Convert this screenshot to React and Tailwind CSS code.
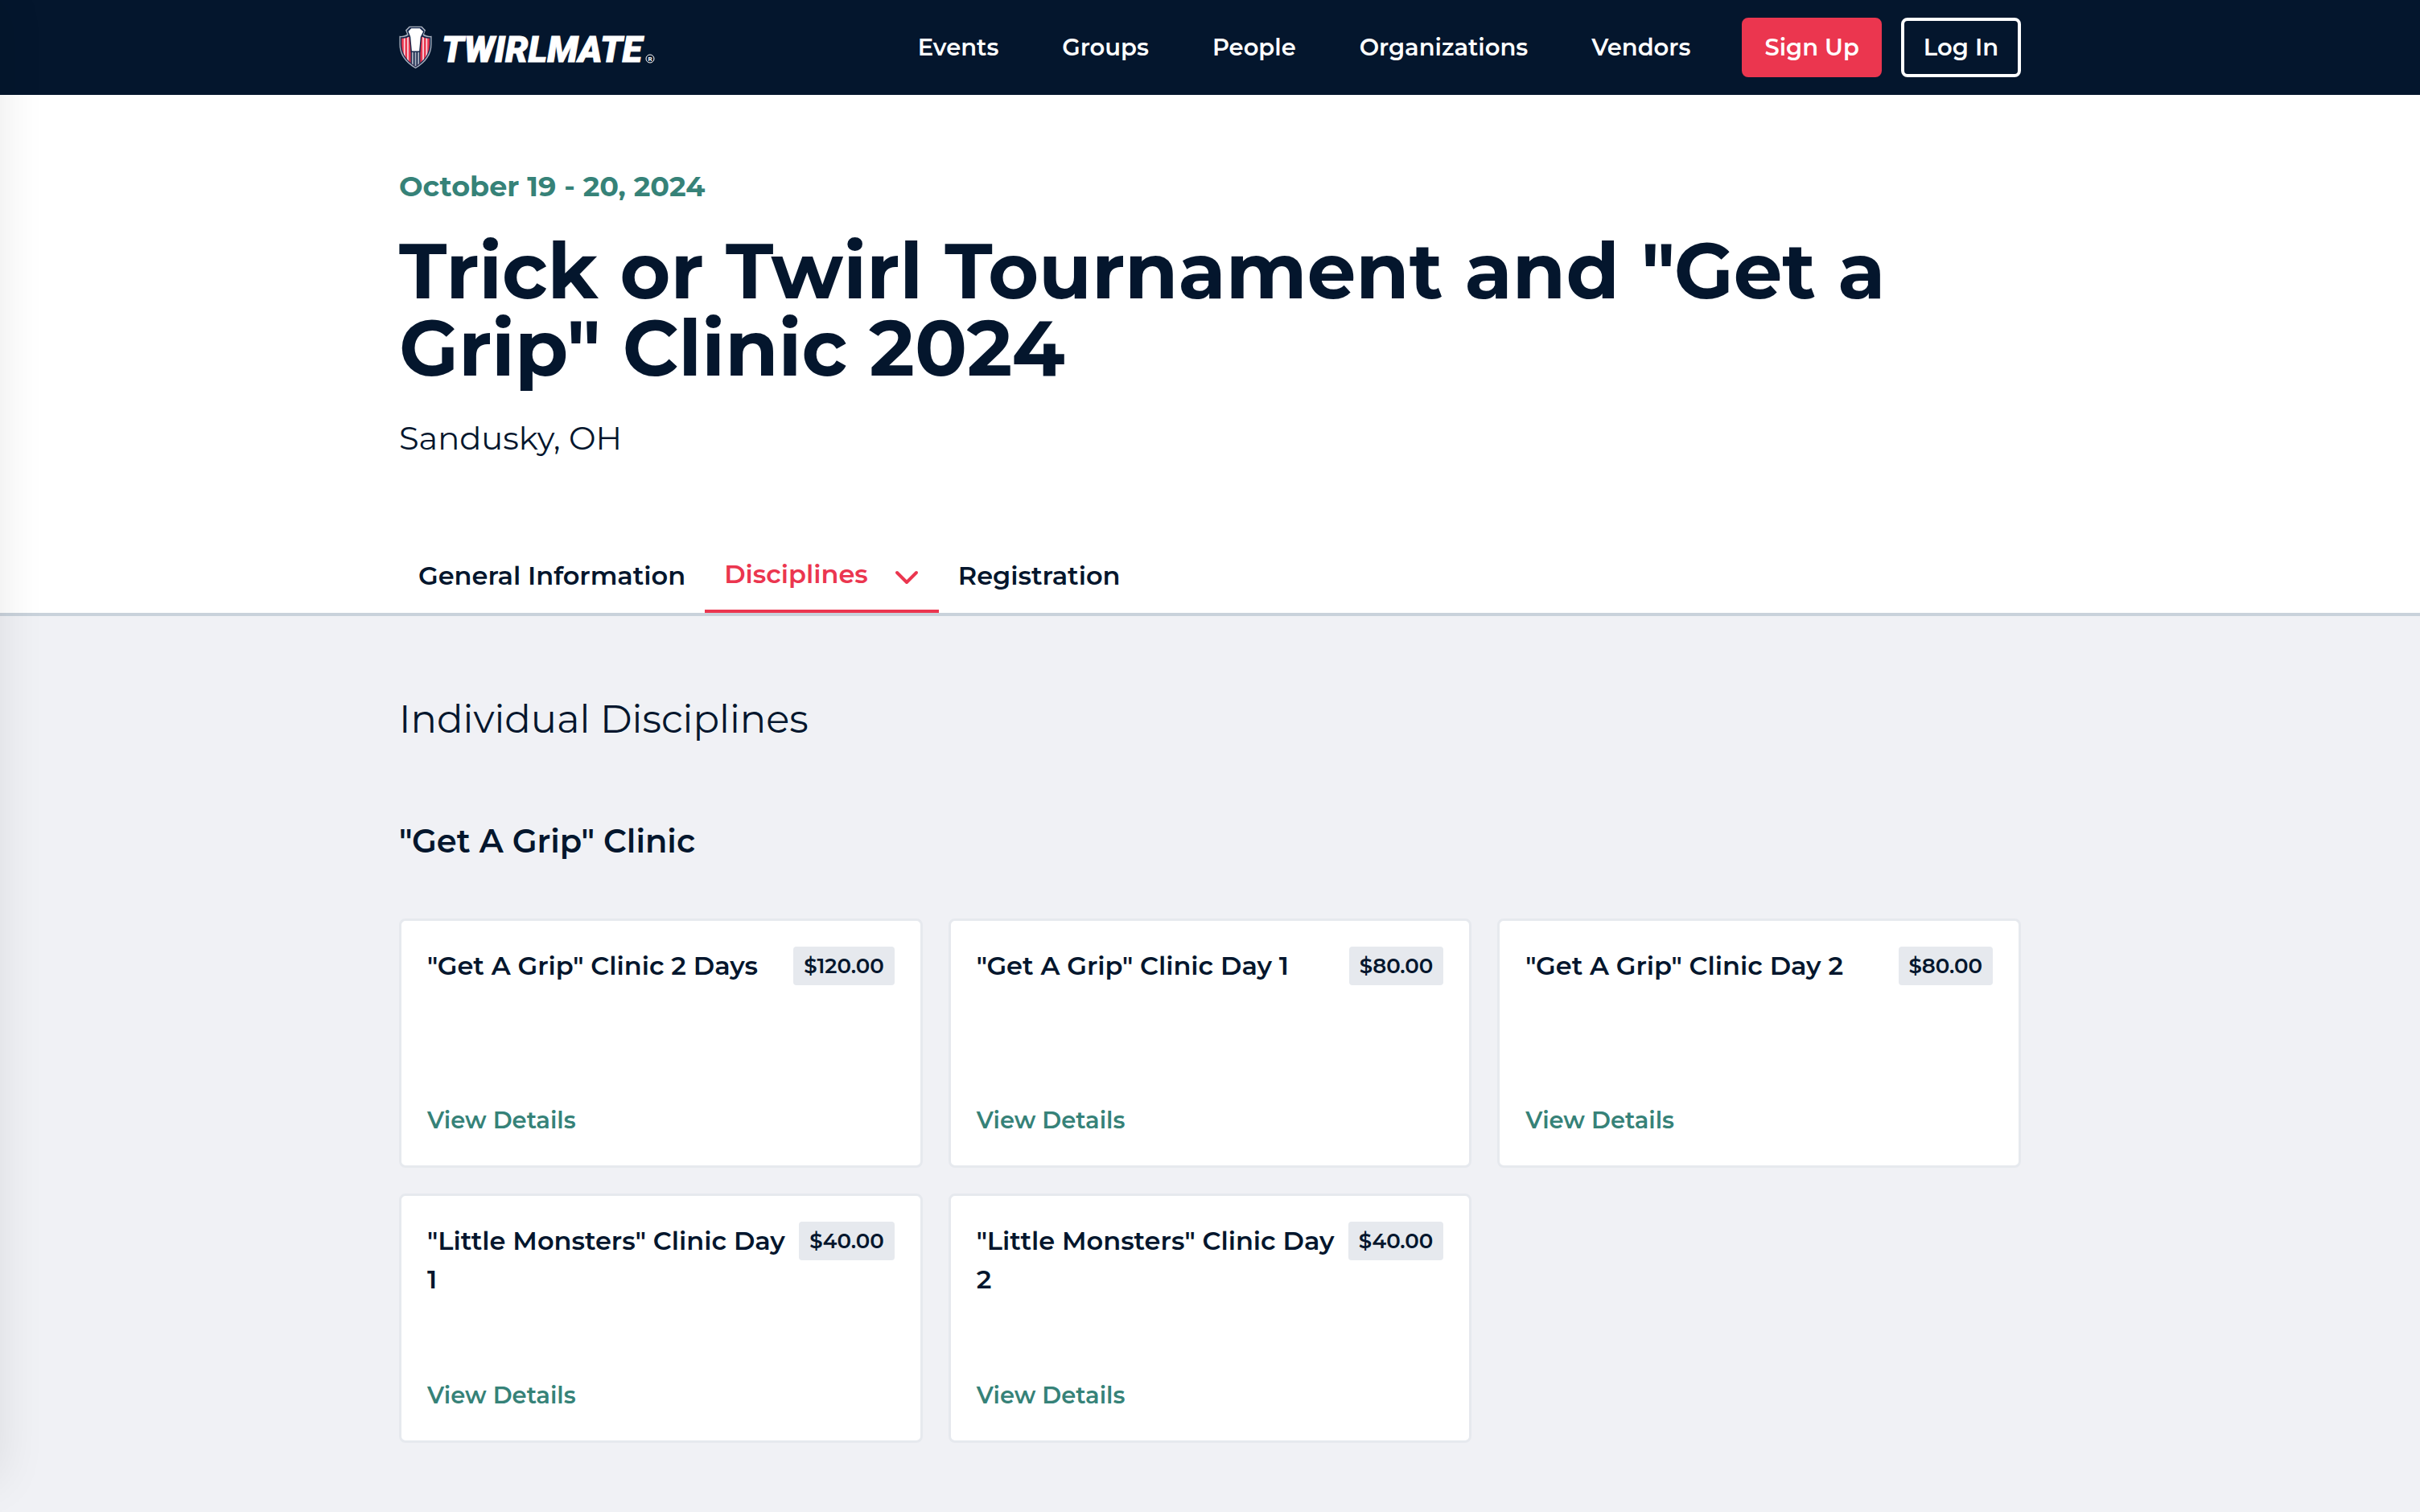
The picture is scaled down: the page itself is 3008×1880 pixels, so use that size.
import React from "react";

const navItems = ["Events", "Groups", "People", "Organizations", "Vendors"];

const disciplines = [
  { title: '"Get A Grip" Clinic 2 Days', price: "$120.00" },
  { title: '"Get A Grip" Clinic Day 1', price: "$80.00" },
  { title: '"Get A Grip" Clinic Day 2', price: "$80.00" },
  { title: '"Little Monsters" Clinic Day 1', price: "$40.00" },
  { title: '"Little Monsters" Clinic Day 2', price: "$40.00" },
];

const container = "mx-auto w-full max-w-[2016px]";

function Shield() {
  return (
    <svg viewBox="0 0 124 164" className="h-[54px] w-[41px]" aria-hidden="true">
      <defs>
        <clipPath id="shield-field">
          <path d="M9 47C20 49 31 46 37 42L62 20L87 42C93 46 104 49 115 47V70C115 104 95 133 62 153C29 133 9 104 9 70Z" />
        </clipPath>
      </defs>
      <path
        d="M38 2H86L100 17L94 32C102 38 113 40 123 39V70C123 110 100 140 62 162C24 140 1 110 1 70V39C11 40 22 38 30 32L24 17Z"
        fill="#a7afbd"
      />
      <path
        d="M41 6H83L95 18L88 35C97 42 108 44 119 43V70C119 107 97 136 62 157C27 136 5 107 5 70V43C16 44 27 42 36 35L29 18Z"
        fill="#14264a"
      />
      <g clipPath="url(#shield-field)">
        <rect x="0" y="30" width="124" height="134" fill="#e9364f" />
        <path d="M20 30V164M33 30V164M91 30V164M104 30V164" stroke="#f7dfe5" strokeWidth="5" />
        <rect x="44" y="60" width="36" height="104" fill="#14264a" />
        <path d="M51 95V164M62 95V164M73 95V164" stroke="#a7afbd" strokeWidth="6" />
      </g>
      <path
        d="M35 21L46 10H78L91 22L81 42L76 96H48L43 42Z"
        fill="#fff"
        stroke="#14264a"
        strokeWidth="8"
        paintOrder="stroke"
      />
    </svg>
  );
}

function Logo() {
  return (
    <a href="#" aria-label="Twirlmate" className="flex items-center gap-3">
      <Shield />
      <svg viewBox="0 0 280 54" className="h-[54px] w-[280px]" aria-hidden="true">
        <text
          x="0"
          y="45"
          fill="#fff"
          stroke="#fff"
          strokeWidth="1"
          className="font-[Roboto,sans-serif] text-[45px] font-black italic"
        >
          TWIRLMATE
        </text>
        <circle cx="259" cy="41" r="5" fill="none" stroke="#fff" strokeWidth="1" />
        <text x="259" y="44" textAnchor="middle" fill="#fff" className="font-[Roboto,sans-serif] text-[8px] font-bold">
          R
        </text>
      </svg>
    </a>
  );
}

function Header() {
  return (
    <header className="bg-[#04162d] text-white">
      <div className={container + " flex h-[118px] items-center justify-between"}>
        <Logo />
        <div className="flex items-center gap-16 text-[29px] font-semibold">
          <nav className="flex gap-[79px]">
            {navItems.map((item) => (
              <a key={item} href="#">
                {item}
              </a>
            ))}
          </nav>
          <div className="flex gap-6 leading-[42px]">
            <button className="rounded-lg border-4 border-[#eb364f] bg-[#eb364f] px-6 py-3">Sign Up</button>
            <button className="rounded-lg border-4 border-white px-6 py-3">Log In</button>
          </div>
        </div>
      </div>
    </header>
  );
}

function EventHeading() {
  return (
    <section className="border-b-4 border-[#c9d2db] bg-white pt-[90px]">
      <div className={container}>
        <p className="text-[35px] leading-12 font-bold text-[#368278]">October 19 - 20, 2024</p>
        <h1 className="mt-[33px] text-[96px] leading-none font-bold">
          Trick or Twirl Tournament and "Get a Grip" Clinic 2024
        </h1>
        <p className="mt-[34px] text-[40px] leading-[60px]">Sandusky, OH</p>
        <nav className="mt-[95px] flex h-[92px] text-[32px] font-semibold">
          <a href="#" className="flex items-center px-6">
            General Information
          </a>
          <button className="flex items-center gap-8 border-b-4 border-[#eb364f] px-6 text-[#eb364f]">
            Disciplines
            <svg viewBox="0 0 32 32" className="size-8" fill="none" stroke="currentColor" strokeWidth="4" aria-hidden="true">
              <path d="M4 14L16 26L28 14" strokeLinecap="round" strokeLinejoin="round" />
            </svg>
          </button>
          <a href="#" className="flex items-center px-6">
            Registration
          </a>
        </nav>
      </div>
    </section>
  );
}

function DisciplineCard({ title, price }) {
  return (
    <article className="flex min-h-[310px] flex-col justify-between rounded-lg border-[3px] border-[#e6e9ee] bg-white p-8">
      <div className="flex items-start justify-between gap-4">
        <h4 className="text-[32px] leading-12 font-semibold">{title}</h4>
        <span className="rounded bg-[#e6e9ee] px-[13px] text-[26px] leading-12 font-semibold">{price}</span>
      </div>
      <a href="#" className="self-start text-[29px] leading-12 font-semibold text-[#368278]">
        View Details
      </a>
    </article>
  );
}

export default function App() {
  return (
    <div className="relative min-h-screen overflow-hidden bg-[#f0f1f5] font-[Montserrat,Inter,sans-serif] text-[#04162d]">
      <Header />
      <EventHeading />
      <main className={container + " pt-[92px] pb-16"}>
        <h2 className="text-[48px] leading-[72px]">Individual Disciplines</h2>
        <h3 className="mt-[86px] text-[40px] leading-[60px] font-semibold">"Get A Grip" Clinic</h3>
        <div className="mt-[66px] grid grid-cols-3 gap-8">
          {disciplines.map((item) => (
            <DisciplineCard key={item.title} {...item} />
          ))}
        </div>
      </main>
      {/* Closed side drawer: only its shadow reaches into the page */}
      <aside
        aria-hidden="true"
        className="pointer-events-none absolute top-0 right-full bottom-10 w-96 shadow-[0_0_56px_rgba(0,0,0,0.09)]"
      />
    </div>
  );
}
